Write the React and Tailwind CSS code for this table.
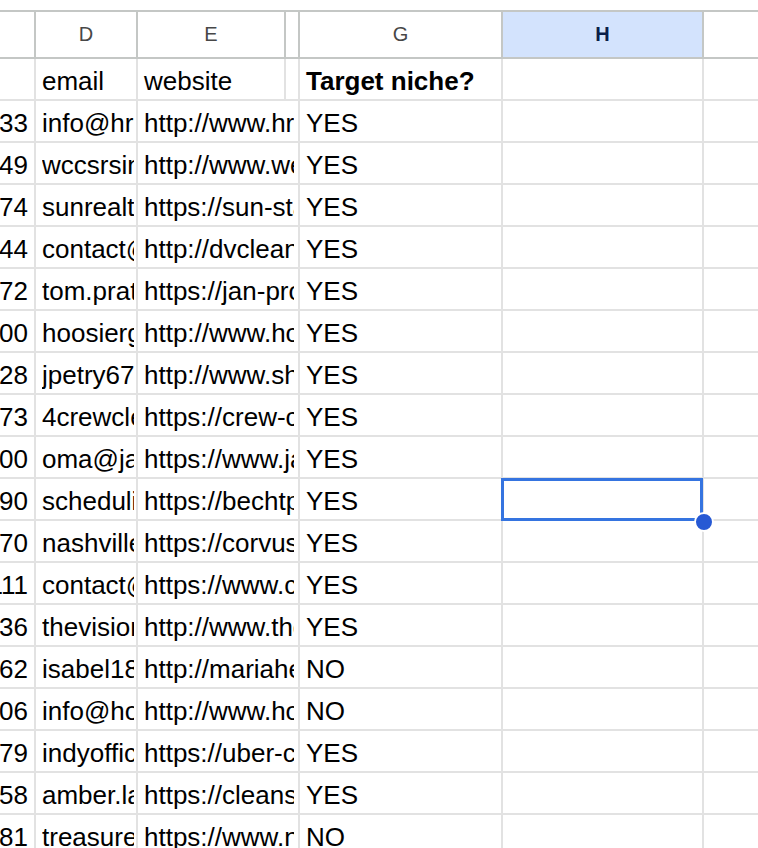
import React from "react";

// C = tail of a number column, D = email, E = website, G = target niche
const rows = [
  ["3175550133", "info@hrcleaning.com", "http://www.hrcleaning.com", "YES"],
  ["3175550149", "wccsrsinc@gmail.com", "http://www.wecleanindy.com", "YES"],
  ["3175550174", "sunrealtyclean@gmail.com", "https://sun-starcleaning.com", "YES"],
  ["3175550144", "contact@dvcleaning.com", "http://dvcleaning.com", "YES"],
  ["3175550172", "tom.pratt@jan-pro.com", "https://jan-pro.com", "YES"],
  ["3175550100", "hoosiergirlsclean@gmail.com", "http://www.hoosiergirls.com", "YES"],
  ["3175550128", "jpetry67@gmail.com", "http://www.shineclean.com", "YES"],
  ["3175550173", "4crewcleaning@gmail.com", "https://crew-cleaning.com", "YES"],
  ["3175550100", "oma@janitorial.com", "https://www.janitorial.com", "YES"],
  ["3175550190", "scheduling@bechtpro.com", "https://bechtpro.com", "YES"],
  ["3175550170", "nashvilleclean@gmail.com", "https://corvusjanitorial.com", "YES"],
  ["3175550111", "contact@cleanpros.com", "https://www.cleanpros.com", "YES"],
  ["3175550136", "thevisioncleaning@gmail.com", "http://www.thevisionclean.com", "YES"],
  ["3175550162", "isabel18@gmail.com", "http://mariahelps.com", "NO"],
  ["3175550106", "info@homecleaning.com", "http://www.homecleaning.com", "NO"],
  ["3175550179", "indyofficeclean@gmail.com", "https://uber-clean.com", "YES"],
  ["3175550158", "amber.lane@cleansweep.com", "https://cleansweep.com", "YES"],
  ["3175550181", "treasurecleaning@gmail.com", "https://www.neatfreak.com", "NO"],
];

const SELECTED_ROW = 9;

function DataRow({ c, d, e, g, selected }) {
  return (
    <div className="flex h-[42px]">
      <div className="flex h-[42px] w-[36px] shrink-0 justify-end overflow-hidden whitespace-nowrap border-r-2 border-b-2 border-[#e2e2e2] pr-[6px] pt-[4px] leading-[36px]">
        {c}
      </div>
      <div className="h-[42px] w-[102px] shrink-0 border-r-2 border-b-2 border-[#e2e2e2] pl-[6px] pt-[4px] leading-[36px]">
        <div className="mr-[2px] overflow-hidden whitespace-nowrap">{d}</div>
      </div>
      <div className="h-[42px] w-[162px] shrink-0 border-r-2 border-b-2 border-[#e2e2e2] pl-[6px] pt-[4px] leading-[36px]">
        <div className="mr-[4px] overflow-hidden whitespace-nowrap">{e}</div>
      </div>
      <div className="h-[42px] w-[203px] shrink-0 border-r-2 border-b-2 border-[#e2e2e2] pl-[6px] pt-[4px] leading-[36px]">
        <div className="mr-[2px] overflow-hidden whitespace-nowrap">{g}</div>
      </div>
      <div className="relative h-[42px] w-[201px] shrink-0 border-r-2 border-b-2 border-[#e2e2e2]">
        {selected && (
          <>
            <div className="absolute left-[-2px] top-[-1px] z-10 h-[43px] w-[202px] border-[3px] border-[#3574e0]" />
            <div className="absolute left-[191px] top-[33px] z-20 h-[20px] w-[20px] rounded-full border-2 border-white bg-[#2659d4]" />
          </>
        )}
      </div>
      <div className="h-[42px] flex-1 border-b-2 border-[#e2e2e2]" />
    </div>
  );
}

export default function App() {
  return (
    <div className="h-[848px] w-[758px] overflow-hidden bg-white font-['Liberation_Sans',Arial,sans-serif] text-[26px] text-black">
      {/* column letters */}
      <div className="mt-[10px] flex h-[49px] border-y-2 border-[#c4c7c5] text-[20px] leading-[45px] text-[#474747]">
        <div className="w-[36px] shrink-0 border-r-2 border-[#c4c7c5]" />
        <div className="w-[102px] shrink-0 border-r-2 border-[#c4c7c5] text-center">D</div>
        <div className="w-[148px] shrink-0 border-r-2 border-[#c4c7c5] text-center">E</div>
        <div className="w-[14px] shrink-0 border-r-2 border-[#c4c7c5]" />
        <div className="w-[203px] shrink-0 border-r-2 border-[#c4c7c5] text-center">G</div>
        <div className="w-[201px] shrink-0 border-r-2 border-[#c4c7c5] bg-[#d3e3fd] text-center font-bold text-[#0b1f4a]">
          H
        </div>
        <div className="flex-1" />
      </div>

      {/* header labels */}
      <div className="flex h-[42px]">
        <div className="h-[42px] w-[36px] shrink-0 border-r-2 border-b-2 border-[#e2e2e2]" />
        <div className="h-[42px] w-[102px] shrink-0 overflow-hidden whitespace-nowrap border-r-2 border-b-2 border-[#e2e2e2] pl-[6px] pt-[4px] leading-[36px]">
          email
        </div>
        <div className="h-[42px] w-[148px] shrink-0 overflow-hidden whitespace-nowrap border-r-2 border-b-2 border-[#e2e2e2] pl-[6px] pt-[4px] leading-[36px]">
          website
        </div>
        <div className="h-[42px] w-[14px] shrink-0 border-r-2 border-b-2 border-[#e2e2e2]" />
        <div className="h-[42px] w-[203px] shrink-0 overflow-hidden whitespace-nowrap border-r-2 border-b-2 border-[#e2e2e2] pl-[6px] pt-[4px] font-bold leading-[36px]">
          Target niche?
        </div>
        <div className="h-[42px] w-[201px] shrink-0 border-r-2 border-b-2 border-[#e2e2e2]" />
        <div className="h-[42px] flex-1 border-b-2 border-[#e2e2e2]" />
      </div>

      {rows.map((r, i) => (
        <DataRow key={i} c={r[0]} d={r[1]} e={r[2]} g={r[3]} selected={i === SELECTED_ROW} />
      ))}
    </div>
  );
}
